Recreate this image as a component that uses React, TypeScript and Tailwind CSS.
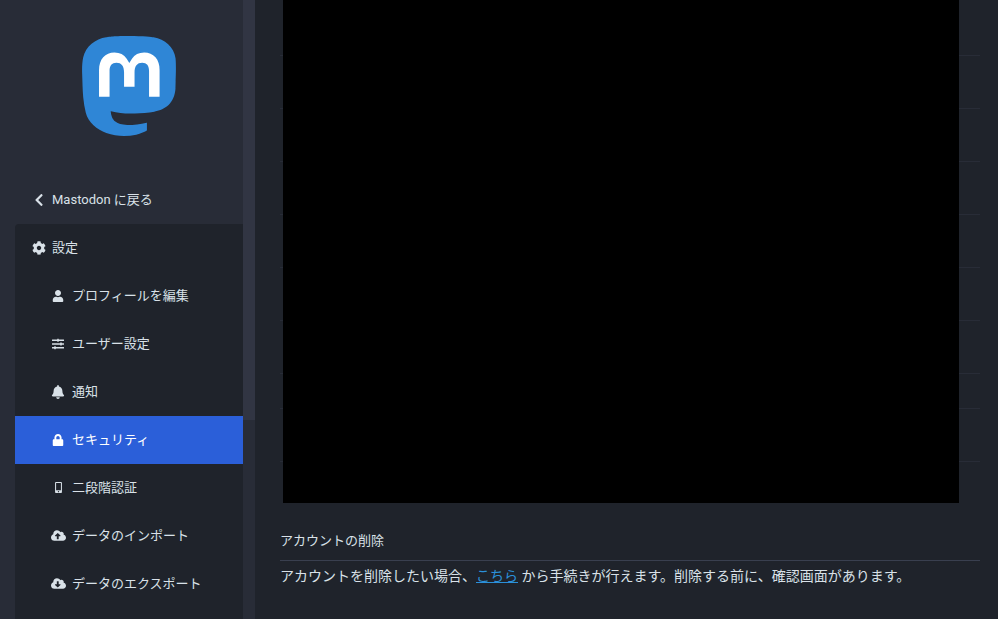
import React from 'react'
import {
  FaChevronLeft,
  FaCog,
  FaUser,
  FaSlidersH,
  FaBell,
  FaLock,
  FaMobileAlt,
  FaCloudUploadAlt,
  FaCloudDownloadAlt,
} from 'react-icons/fa'

const subItems = [
  { label: 'プロフィールを編集', icon: FaUser, size: 'text-[12px]' },
  { label: 'ユーザー設定', icon: FaSlidersH, size: 'text-[12px]' },
  { label: '通知', icon: FaBell, size: 'text-[14px]' },
  { label: 'セキュリティ', icon: FaLock, size: 'text-[12px]', active: true },
  { label: '二段階認証', icon: FaMobileAlt, size: 'text-[11px]' },
  { label: 'データのインポート', icon: FaCloudUploadAlt, size: 'text-[15px]' },
  { label: 'データのエクスポート', icon: FaCloudDownloadAlt, size: 'text-[15px]' },
]

// bottom border of each table row sits at these heights
const rowHeights = [
  'h-[56px]',
  'h-[53px]',
  'h-[53px]',
  'h-[53px]',
  'h-[53px]',
  'h-[53px]',
  'h-[53px]',
  'h-[35px]',
  'h-[53px]',
]

function Logo() {
  return (
    <svg width="94" height="100" viewBox="0 0 61 65" fill="none">
      <path
        fill="#2f86d6"
        d="M60.7539 14.3904C59.8143 7.40642 53.7273 1.90257 46.5117 0.836066C45.2943 0.655854 40.6819 0 29.9973 0H29.9175C19.2299 0 16.937 0.655854 15.7196 0.836066C8.70488 1.87302 2.29885 6.81852 0.744617 13.8852C-0.00294988 17.3654 -0.0827298 21.2237 0.0561464 24.7629C0.254119 29.8384 0.292531 34.905 0.753482 39.9598C1.07215 43.3175 1.62806 46.6484 2.41704 49.9276C3.89445 55.9839 9.87499 61.0239 15.7344 63.0801C22.0077 65.2244 28.7542 65.5804 35.2184 64.1082C35.9295 63.9428 36.6318 63.7508 37.3252 63.5321C38.8971 63.0329 40.738 62.4745 42.0913 61.4937C42.1099 61.4799 42.1251 61.4621 42.1358 61.4417C42.1466 61.4212 42.1526 61.3986 42.1534 61.3755V56.4773C42.153 56.4557 42.1479 56.4345 42.1383 56.4151C42.1287 56.3958 42.1149 56.3788 42.0979 56.3655C42.0809 56.3522 42.0611 56.3429 42.04 56.3382C42.019 56.3335 41.9971 56.3336 41.9761 56.3384C37.8345 57.3276 33.5905 57.8234 29.3324 57.8156C22.0045 57.8156 20.0336 54.3384 19.4693 52.8908C19.0156 51.6397 18.7275 50.3346 18.6124 49.0088C18.6112 48.9866 18.6153 48.9643 18.6243 48.9439C18.6333 48.9236 18.647 48.9056 18.6643 48.8915C18.6816 48.8774 18.7019 48.8675 18.7237 48.8628C18.7455 48.858 18.7681 48.8585 18.7897 48.8641C22.8622 49.8465 27.037 50.3423 31.2265 50.3412C32.234 50.3412 33.2387 50.3412 34.2463 50.3146C38.4598 50.1964 42.9 49.9808 47.0425 49.1713C47.1455 49.1506 47.2488 49.1329 47.3371 49.1063C53.8753 47.8547 60.0974 43.9268 60.7296 33.9795C60.7533 33.5878 60.8124 29.8767 60.8124 29.4704C60.8152 28.0871 61.2608 19.6601 60.7539 14.3904Z"
      />
      <path
        fill="#ffffff"
        d="M50.3828 22.2492V39.5449H43.5288V22.7599C43.5288 19.2237 42.0543 17.4204 39.0551 17.4204C35.7577 17.4204 34.1057 19.5559 34.1057 23.7743V32.9729H27.2876V23.7743C27.2876 19.5559 25.6326 17.4204 22.3352 17.4204C19.3545 17.4204 17.8651 19.2237 17.8651 22.7599V39.5449H11.0142V22.2492C11.0142 18.7149 11.9163 15.9068 13.7204 13.8248C15.5814 11.7477 18.0247 10.6816 21.0625 10.6816C24.5797 10.6816 27.2375 12.0342 29 14.7364L30.7107 17.6082L32.4244 14.7364C34.187 12.0342 36.8447 10.6816 40.3589 10.6816C43.3938 10.6816 45.837 11.7477 47.7011 13.8248C49.5052 15.9048 50.4073 18.7129 50.3828 22.2492Z"
      />
    </svg>
  )
}

function Sidebar() {
  return (
    <aside className="flex w-[255px] shrink-0 bg-[#282c37]">
      <div className="w-[243px] pl-[15px] text-[13px]">
        <div className="flex justify-center pt-[36px] pb-[40px]">
          <Logo />
        </div>

        <a className="flex h-12 items-center pb-px text-[#d9e1e8]">
          <span className="flex w-[37px] justify-center pl-[11px] text-[14px]">
            <FaChevronLeft />
          </span>
          Mastodon に戻る
        </a>

        <a className="flex h-12 items-center rounded-tl bg-[#1f232b] pb-px text-[#d9e1e8]">
          <span className="flex w-[37px] justify-center pl-[11px] text-[14px]">
            <FaCog />
          </span>
          設定
        </a>

        <ul className="bg-[#1f232b]">
          {subItems.map((item) => {
            const Icon = item.icon
            return (
              <li
                key={item.label}
                className={
                  item.active
                    ? 'flex h-12 items-center bg-[#2b5fd9] pb-px text-white'
                    : 'flex h-12 items-center pb-px text-[#d9e1e8]'
                }
              >
                <span className={`flex w-[57px] justify-center pl-[29px] ${item.size}`}>
                  <Icon />
                </span>
                {item.label}
              </li>
            )
          })}
          <li className="h-3" />
        </ul>
      </div>

      {/* scrollbar */}
      <div className="w-3">
        <div className="h-[420px] bg-[#313543]" />
      </div>
    </aside>
  )
}

export default function App() {
  return (
    <div className="flex h-screen overflow-hidden bg-[#1f232b] font-['Roboto','Noto_Sans_CJK_JP',sans-serif] text-[14px] leading-5">
      <Sidebar />

      <main className="w-[725px] shrink-0 pl-[25px]">
        <div className="relative">
          {rowHeights.map((h, i) => (
            <div key={i} className={`${h} border-b border-[#282c37]`} />
          ))}
          <div className="absolute top-0 left-[3px] h-[503px] w-[676px] bg-black" />
        </div>

        <h3 className="mt-[69px] border-b border-[#393f4f] pb-[9px] text-[13px] text-[#d9e1e8]">
          アカウントの削除
        </h3>
        <p className="mt-[5px] text-[#d9e1e8]">
          アカウントを削除したい場合、
          <a className="text-[#2b90d9] underline">こちら</a>
          {' '}から手続きが行えます。削除する前に、確認画面があります。
        </p>
      </main>
    </div>
  )
}
